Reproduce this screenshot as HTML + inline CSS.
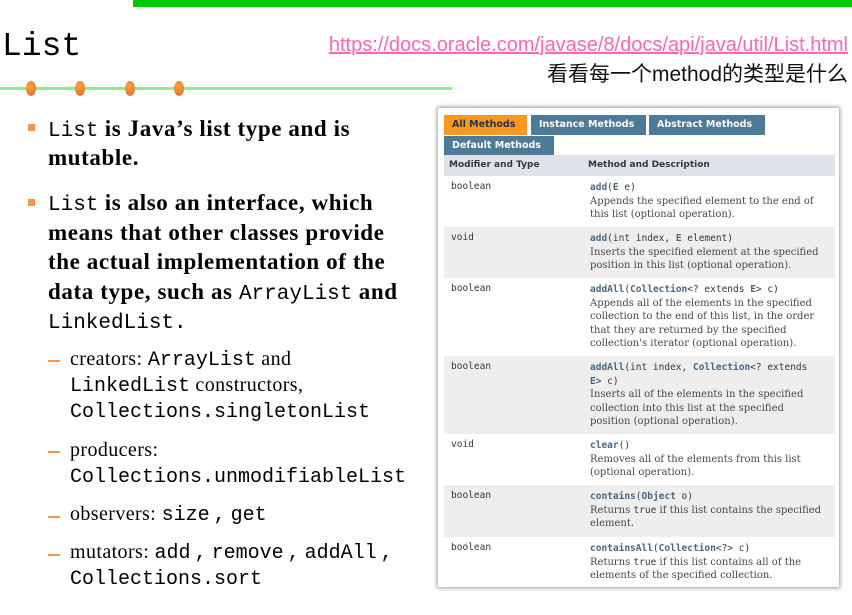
<!DOCTYPE html>
<html><head><meta charset="utf-8"><style>
body{margin:0;width:852px;height:615px;background:#fff;position:relative;overflow:hidden;font-family:"Liberation Serif",serif;color:#000}
.a{position:absolute;white-space:nowrap}
.m{font-family:"Liberation Mono",monospace;font-weight:normal;letter-spacing:0}
.b{font-weight:bold;font-size:23px;left:48px;letter-spacing:0.6px}
.s{font-size:20px;left:70px;letter-spacing:0.4px}
.s .m{font-size:20px}
.b .m{font-size:21px}
.k{margin:0 5px 0 4px}
.sq{position:absolute;left:28px;width:7px;height:7px;background:#f79646}
.dash{position:absolute;left:48px;width:12px;height:2px;background:#f79646}
.dot{position:absolute;top:81px;width:10px;height:15px;border-radius:50%;background:radial-gradient(circle at 40% 35%,#f9a050,#e06b10)}
#t{position:absolute;left:438px;top:108px;width:401px;height:479px;background:#fff;box-shadow:0 0 4px 1px #999;font-family:"DejaVu Sans",sans-serif}
.tab{position:absolute;height:20px;color:#fff;font-weight:bold;font-size:9.5px;line-height:20px;padding-left:8px;box-sizing:border-box;background:#4d7a97}
.row{position:absolute;left:6px;width:391px}
.row .l{position:absolute;left:7px;top:5px;font-family:"DejaVu Sans Mono",monospace;font-size:9.5px;color:#353833}
.row .r{position:absolute;left:146px;top:5px;font-size:10px;line-height:13.5px;color:#474747;font-family:"DejaVu Serif",serif;white-space:nowrap}
.row .r .c{font-family:"DejaVu Sans Mono",monospace;color:#353833;font-size:9.5px}
.row .r .c b{color:#4a6782}
</style></head><body>
<div style="position:absolute;left:133px;top:0;width:719px;height:7px;background:#00c800"></div>
<div class="a m" style="left:2px;top:28px;font-size:33px">List</div>
<div class="a" style="right:4px;top:34px;font-size:20px;font-family:'Liberation Sans',sans-serif;color:#ff66b0;text-decoration:underline">https://docs.oracle.com/javase/8/docs/api/java/util/List.html</div>
<div class="a" style="right:4px;top:58px;font-size:21px;font-family:'Liberation Sans','Noto Sans CJK SC',sans-serif;color:#111">看看每一个method的类型是什么</div>
<div style="position:absolute;left:0;top:87px;width:452px;height:3px;background:#90e890"></div>
<div class="dot" style="left:26px"></div><div class="dot" style="left:75px"></div><div class="dot" style="left:125px"></div><div class="dot" style="left:174px"></div>

<div class="sq" style="top:124px"></div>
<div class="a b" style="top:116px"><span class="m">List</span> is Java’s list type and is</div>
<div class="a b" style="top:145px">mutable.</div>
<div class="sq" style="top:199px"></div>
<div class="a b" style="top:190px"><span class="m">List</span> is also an interface, which</div>
<div class="a b" style="top:220px">means that other classes provide</div>
<div class="a b" style="top:249px">the actual implementation of the</div>
<div class="a b" style="top:279px">data type, such as <span class="m">ArrayList</span> and</div>
<div class="a b" style="top:308px"><span class="m">LinkedList.</span></div>

<div class="dash" style="top:360px"></div>
<div class="a s" style="top:348px">creators: <span class="m">ArrayList</span> and</div>
<div class="a s" style="top:374px"><span class="m">LinkedList</span> constructors,</div>
<div class="a s" style="top:400px"><span class="m">Collections.singletonList</span></div>
<div class="dash" style="top:451px"></div>
<div class="a s" style="top:439px">producers:</div>
<div class="a s" style="top:465px"><span class="m">Collections.unmodifiableList</span></div>
<div class="dash" style="top:516px"></div>
<div class="a s" style="top:503px">observers: <span class="m">size<span class="k">,</span>get</span></div>
<div class="dash" style="top:554px"></div>
<div class="a s" style="top:541px">mutators: <span class="m">add<span class="k">,</span>remove<span class="k">,</span>addAll<span class="k">,</span></span></div>
<div class="a s" style="top:567px"><span class="m">Collections.sort</span></div>

<div id="t">
<div class="tab" style="left:6px;top:7px;width:83px;background:#f8981d;color:#253441">All Methods</div>
<div class="tab" style="left:93px;top:7px;width:115px">Instance Methods</div>
<div class="tab" style="left:211px;top:7px;width:116px">Abstract Methods</div>
<div class="tab" style="left:6px;top:28px;width:110px">Default Methods</div>
<div class="row" style="top:47px;height:21px;background:#dee3e9;font-size:9px;font-weight:bold;color:#353833"><span style="position:absolute;left:5px;top:5px">Modifier and Type</span><span style="position:absolute;left:144px;top:5px">Method and Description</span></div>
<div class="row" style="top:68px;height:51px;background:#fff"><div class="l">boolean</div><div class="r"><span class="c"><b>add</b>(<b>E</b> e)</span><br>Appends the specified element to the end of<br>this list (optional operation).</div></div>
<div class="row" style="top:119px;height:51px;background:#eeeeef"><div class="l">void</div><div class="r"><span class="c"><b>add</b>(int index, <b>E</b> element)</span><br>Inserts the specified element at the specified<br>position in this list (optional operation).</div></div>
<div class="row" style="top:170px;height:78px;background:#fff"><div class="l">boolean</div><div class="r"><span class="c"><b>addAll</b>(<b>Collection</b>&lt;? extends <b>E</b>&gt; c)</span><br>Appends all of the elements in the specified<br>collection to the end of this list, in the order<br>that they are returned by the specified<br>collection's iterator (optional operation).</div></div>
<div class="row" style="top:248px;height:78px;background:#eeeeef"><div class="l">boolean</div><div class="r"><span class="c"><b>addAll</b>(int index, <b>Collection</b>&lt;? extends<br><b>E</b>&gt; c)</span><br>Inserts all of the elements in the specified<br>collection into this list at the specified<br>position (optional operation).</div></div>
<div class="row" style="top:326px;height:51px;background:#fff"><div class="l">void</div><div class="r"><span class="c"><b>clear</b>()</span><br>Removes all of the elements from this list<br>(optional operation).</div></div>
<div class="row" style="top:377px;height:52px;background:#eeeeef"><div class="l">boolean</div><div class="r"><span class="c"><b>contains</b>(<b>Object</b> o)</span><br>Returns <span class="c">true</span> if this list contains the specified<br>element.</div></div>
<div class="row" style="top:429px;height:48px;background:#fff"><div class="l">boolean</div><div class="r"><span class="c"><b>containsAll</b>(<b>Collection</b>&lt;?&gt; c)</span><br>Returns <span class="c">true</span> if this list contains all of the<br>elements of the specified collection.</div></div>
</div>
</body></html>
